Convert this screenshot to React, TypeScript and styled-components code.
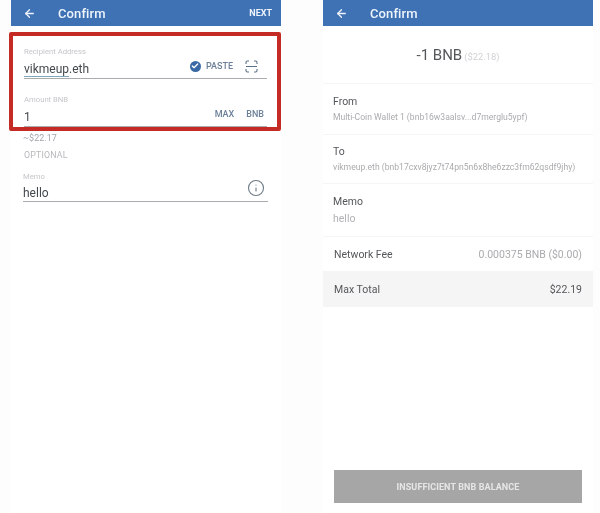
import styled, { createGlobalStyle } from "styled-components";
import { ArrowLeft, Check, Info } from "lucide-react";

const GlobalStyle = createGlobalStyle`
  html, body {
    margin: 0;
    padding: 0;
    background: #fdfdfd;
    font-family: Roboto, "Liberation Sans", sans-serif;
  }
`;

const Page = styled.div`
  display: flex;
  gap: 42px;
  width: 600px;
  height: 513px;
  padding-left: 11px;
  box-sizing: border-box;
  overflow: hidden;
  filter: blur(0.45px);
`;

const Panel = styled.section`
  display: flex;
  flex-direction: column;
  width: 270px;
  height: 513px;
  background: #fff;
`;

const TopBar = styled.header`
  display: flex;
  flex: none;
  align-items: center;
  height: 26px;
  padding: 0 9px 0 12px;
  background: #3f71b5;
  color: #eef4fb;
`;

const BarTitle = styled.h1`
  flex: 1;
  margin: 0 0 0 22px;
  font-size: 13px;
  font-weight: 500;
  letter-spacing: 0.1px;
`;

const BarAction = styled.span`
  font-size: 9px;
  font-weight: 700;
`;

const Highlight = styled.div`
  display: flex;
  flex-direction: column;
  height: 99px;
  margin: 6px 0 0 -2px;
  width: 272px;
  padding: 11px 10px 0 11px;
  box-sizing: border-box;
  border: 4px solid #c42b25;
  border-radius: 2px;
  background: #fff;
`;

const Field = styled.div<{ $height: number }>`
  display: flex;
  flex: none;
  flex-direction: column;
  justify-content: flex-end;
  height: ${(p) => p.$height}px;
  border-bottom: 1px solid #a9acae;
  box-sizing: border-box;
`;

const FieldLabel = styled.div`
  font-size: 7.7px;
  line-height: 10px;
  color: #c4c6c8;
`;

const FieldRow = styled.div`
  display: flex;
  align-items: center;
  justify-content: space-between;
  height: 21px;
`;

const FieldValue = styled.span`
  padding-top: 2px;
  font-size: 12px;
  color: #44494d;
`;

const Underlined = styled.span`
  border-bottom: 1px solid #7fa8b8;
`;

const FieldTools = styled.div<{ $inset: number }>`
  display: flex;
  align-items: center;
  gap: 12px;
  margin: -3px ${(p) => p.$inset}px 0 0;
`;

const ToolText = styled.span`
  font-size: 9px;
  font-weight: 500;
  color: #6c8199;
`;

const Paste = styled.span`
  display: flex;
  align-items: center;
  gap: 5px;
`;

const CheckDot = styled.span`
  display: flex;
  align-items: center;
  justify-content: center;
  width: 11px;
  height: 11px;
  border-radius: 50%;
  background: #3a6aa6;
  color: #fff;
`;

const LowerForm = styled.div`
  display: flex;
  flex-direction: column;
  padding: 0 13px 0 12px;
`;

const Approx = styled.div`
  margin-top: 1px;
  font-size: 9px;
  line-height: 12px;
  color: #a4a7aa;
`;

const Optional = styled.div`
  margin: 5px 0 0 1px;
  font-size: 8.8px;
  line-height: 12px;
  letter-spacing: 0.2px;
  color: #b6b8ba;
`;

const MemoField = styled(Field)`
  margin-top: 8px;
`;

const MemoRow = styled(FieldRow)`
  height: 19px;
`;

const InfoMark = styled.span`
  display: flex;
  margin: -8px 3px 0 0;
  color: #6d7b86;
`;

const Amount = styled.div`
  display: flex;
  flex: none;
  align-items: baseline;
  justify-content: center;
  gap: 2px;
  height: 57px;
  box-sizing: border-box;
  line-height: 58px;
  font-size: 15px;
  color: #55585b;
`;

const AmountFiat = styled.span`
  font-size: 9.4px;
  color: #d0d2d4;
`;

const InfoBlock = styled.div<{ $height: number; $lift?: boolean }>`
  display: flex;
  flex: none;
  flex-direction: column;
  justify-content: center;
  height: ${(p) => p.$height}px;
  padding: 0 10px ${(p) => (p.$lift ? 2 : 0)}px;
  box-sizing: border-box;
  border-top: 1px solid #f6f6f6;
`;

const BlockTitle = styled.div`
  font-size: 10.5px;
  line-height: 14px;
  color: #54575a;
`;

const BlockText = styled.div`
  margin-top: 3px;
  font-size: 8.6px;
  line-height: 10px;
  white-space: nowrap;
  color: #a9abad;
`;

const MemoText = styled.div`
  margin-top: 3px;
  font-size: 10.5px;
  line-height: 14px;
  color: #b0b2b4;
`;

const SummaryRow = styled.div<{ $shaded?: boolean }>`
  display: flex;
  flex: none;
  align-items: center;
  justify-content: space-between;
  height: ${(p) => (p.$shaded ? 36 : 35)}px;
  padding: 0 11px;
  box-sizing: border-box;
  font-size: 10.5px;
  color: #54575a;
  background: ${(p) => (p.$shaded ? "#f5f5f5" : "#fff")};
  border-top: ${(p) => (p.$shaded ? "none" : "1px solid #f6f6f6")};
`;

const FeeValue = styled.span`
  color: #a9abad;
`;

const Footer = styled.div`
  display: flex;
  flex: 1;
  align-items: flex-end;
  padding: 0 10px 10px 11px;
`;

const SubmitButton = styled.button`
  width: 248px;
  height: 33px;
  padding: 0;
  border: none;
  background: #a6a6a6;
  color: #e6e6e6;
  font-family: inherit;
  font-size: 9px;
  font-weight: 700;
  letter-spacing: 0.1px;
`;

function ScanIcon() {
  return (
    <svg width="13" height="13" viewBox="0 0 13 13" fill="none" stroke="#5b7288" strokeWidth="1.1">
      <path d="M1 4V2.4C1 1.6 1.6 1 2.4 1H4M9 1h1.6c.8 0 1.4.6 1.4 1.4V4M1 6.5h11M1 9v1.6c0 .8.6 1.4 1.4 1.4H4M9 12h1.6c.8 0 1.4-.6 1.4-1.4V9" />
    </svg>
  );
}

function Header({ action }: { action?: string }) {
  return (
    <TopBar>
      <ArrowLeft size={13} strokeWidth={2.4} />
      <BarTitle>Confirm</BarTitle>
      {action && <BarAction>{action}</BarAction>}
    </TopBar>
  );
}

export default function App() {
  return (
    <>
      <GlobalStyle />
      <Page>
        <Panel>
          <Header action="NEXT" />
          <Highlight>
            <Field $height={32}>
              <FieldLabel>Recipient Address</FieldLabel>
              <FieldRow>
                <FieldValue>
                  <Underlined>vikmeup</Underlined>.eth
                </FieldValue>
                <FieldTools $inset={9}>
                  <Paste>
                    <CheckDot>
                      <Check size={8} strokeWidth={4} />
                    </CheckDot>
                    <ToolText>PASTE</ToolText>
                  </Paste>
                  <ScanIcon />
                </FieldTools>
              </FieldRow>
            </Field>
            <Field $height={48}>
              <FieldLabel>Amount BNB</FieldLabel>
              <FieldRow>
                <FieldValue>1</FieldValue>
                <FieldTools $inset={3}>
                  <ToolText>MAX</ToolText>
                  <ToolText>BNB</ToolText>
                </FieldTools>
              </FieldRow>
            </Field>
          </Highlight>
          <LowerForm>
            <Approx>~$22.17</Approx>
            <Optional>OPTIONAL</Optional>
            <MemoField $height={33}>
              <FieldLabel>Memo</FieldLabel>
              <MemoRow>
                <FieldValue>hello</FieldValue>
                <InfoMark>
                  <Info size={18} strokeWidth={1.5} />
                </InfoMark>
              </MemoRow>
            </MemoField>
          </LowerForm>
        </Panel>
        <Panel>
          <Header />
          <Amount>
            -1 BNB <AmountFiat>($22.18)</AmountFiat>
          </Amount>
          <InfoBlock $height={51} $lift>
            <BlockTitle>From</BlockTitle>
            <BlockText>Multi-Coin Wallet 1 (bnb16w3aalsv...d7merglu5ypf)</BlockText>
          </InfoBlock>
          <InfoBlock $height={49} $lift>
            <BlockTitle>To</BlockTitle>
            <BlockText>vikmeup.eth (bnb17cxv8jyz7t74pn5n6x8he6zzc3fm62qsdf9jhy)</BlockText>
          </InfoBlock>
          <InfoBlock $height={53}>
            <BlockTitle>Memo</BlockTitle>
            <MemoText>hello</MemoText>
          </InfoBlock>
          <SummaryRow>
            <span>Network Fee</span>
            <FeeValue>0.000375 BNB ($0.00)</FeeValue>
          </SummaryRow>
          <SummaryRow $shaded>
            <span>Max Total</span>
            <span>$22.19</span>
          </SummaryRow>
          <Footer>
            <SubmitButton>INSUFFICIENT BNB BALANCE</SubmitButton>
          </Footer>
        </Panel>
      </Page>
    </>
  );
}
